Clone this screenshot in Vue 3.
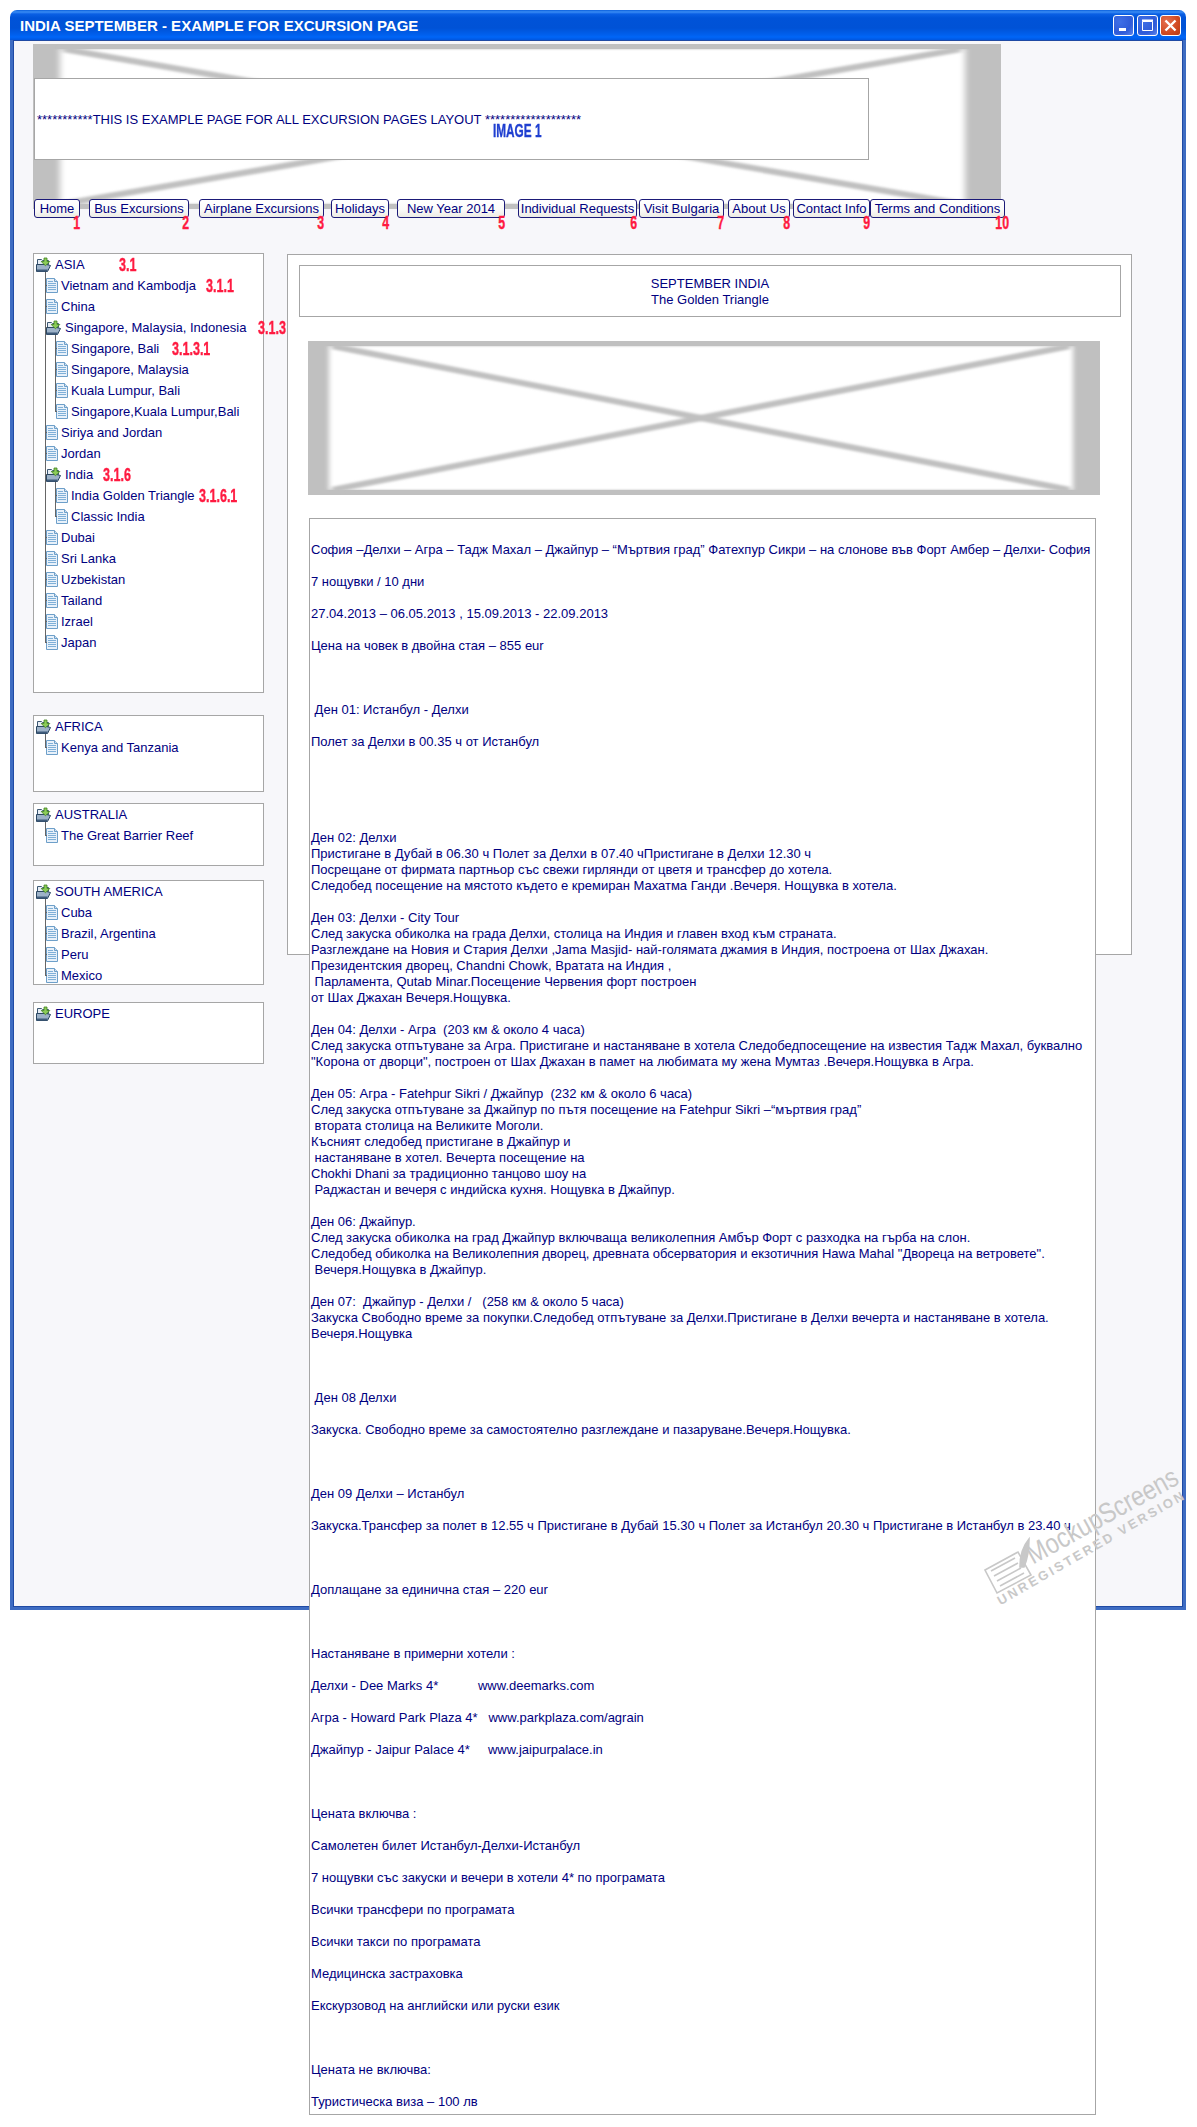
<script setup>
const navItems = ['Home', 'Bus Excursions', 'Airplane Excursions', 'Holidays', 'New Year 2014', 'Individual Requests', 'Visit Bulgaria', 'About Us', 'Contact Info', 'Terms and Conditions']

const panels = [
  {
    id: 'asia', title: 'ASIA', tag: { text: '3.1', x: 85 },
    items: [
      { label: 'Vietnam and Kambodja', tag: { text: '3.1.1', x: 161 } },
      { label: 'China' },
      {
        label: 'Singapore, Malaysia, Indonesia', tag: { text: '3.1.3', x: 213 },
        children: [
          { label: 'Singapore, Bali', tag: { text: '3.1.3.1', x: 117 } },
          { label: 'Singapore, Malaysia' },
          { label: 'Kuala Lumpur, Bali' },
          { label: 'Singapore,Kuala Lumpur,Bali' }
        ]
      },
      { label: 'Siriya and Jordan' },
      { label: 'Jordan' },
      {
        label: 'India', tag: { text: '3.1.6', x: 58 },
        children: [
          { label: 'India Golden Triangle', tag: { text: '3.1.6.1', x: 144 } },
          { label: 'Classic India' }
        ]
      },
      { label: 'Dubai' },
      { label: 'Sri Lanka' },
      { label: 'Uzbekistan' },
      { label: 'Tailand' },
      { label: 'Izrael' },
      { label: 'Japan' }
    ]
  },
  { id: 'africa', title: 'AFRICA', items: [{ label: 'Kenya and Tanzania' }] },
  { id: 'australia', title: 'AUSTRALIA', items: [{ label: 'The Great Barrier Reef' }] },
  { id: 'samerica', title: 'SOUTH AMERICA', items: [{ label: 'Cuba' }, { label: 'Brazil, Argentina' }, { label: 'Peru' }, { label: 'Mexico' }] },
  { id: 'europe', title: 'EUROPE', items: [] }
]

const programme = `София –Делхи – Агра – Тадж Махал – Джайпур – “Мъртвия град” Фатехпур Сикри – на слонове във Форт Амбер – Делхи- София

7 нощувки / 10 дни

27.04.2013 – 06.05.2013 , 15.09.2013 - 22.09.2013

Цена на човек в двойна стая – 855 eur



 Ден 01: Истанбул - Делхи

Полет за Делхи в 00.35 ч от Истанбул





Ден 02: Делхи
Пристигане в Дубай в 06.30 ч Полет за Делхи в 07.40 чПристигане в Делхи 12.30 ч
Посрещане от фирмата партньор със свежи гирлянди от цветя и трансфер до хотела.
Следобед посещение на мястото където е кремиран Махатма Ганди .Вечеря. Нощувка в хотела.

Ден 03: Делхи - City Tour
След закуска обиколка на града Делхи, столица на Индия и главен вход към страната.
Разглеждане на Новия и Стария Делхи ,Jama Masjid- най-голямата джамия в Индия, построена от Шах Джахан.
Президентския дворец, Chandni Chowk, Вратата на Индия ,
 Парламента, Qutab Minar.Посещение Червения форт построен
от Шах Джахан Вечеря.Нощувка.

Ден 04: Делхи - Агра  (203 км & около 4 часа)
След закуска отпътуване за Агра. Пристигане и настаняване в хотела Следобедпосещение на известия Тадж Махал, буквално
"Корона от дворци", построен от Шах Джахан в памет на любимата му жена Мумтаз .Вечеря.Нощувка в Агра.

Ден 05: Агра - Fatehpur Sikri / Джайпур  (232 км & около 6 часа)
След закуска отпътуване за Джайпур по пътя посещение на Fatehpur Sikri –“мъртвия град”
 втората столица на Великите Моголи.
Късният следобед пристигане в Джайпур и
 настаняване в хотел. Вечерта посещение на
Chokhi Dhani за традиционно танцово шоу на
 Раджастан и вечеря с индийска кухня. Нощувка в Джайпур.

Ден 06: Джайпур.
След закуска обиколка на град Джайпур включваща великолепния Амбър Форт с разходка на гърба на слон.
Следобед обиколка на Великолепния дворец, древната обсерватория и екзотичния Hawa Mahal "Двореца на ветровете".
 Вечеря.Нощувка в Джайпур.

Ден 07:  Джайпур - Делхи /   (258 км & около 5 часа)
Закуска Свободно време за покупки.Следобед отпътуване за Делхи.Пристигане в Делхи вечерта и настаняване в хотела.
Вечеря.Нощувка



 Ден 08 Делхи

Закуска. Свободно време за самостоятелно разглеждане и пазаруване.Вечеря.Нощувка.



Ден 09 Делхи – Истанбул

Закуска.Трансфер за полет в 12.55 ч Пристигане в Дубай 15.30 ч Полет за Истанбул 20.30 ч Пристигане в Истанбул в 23.40 ч



Доплащане за единична стая – 220 eur



Настаняване в примерни хотели :

Делхи - Dee Marks 4*           www.deemarks.com

Агра - Howard Park Plaza 4*   www.parkplaza.com/agrain

Джайпур - Jaipur Palace 4*     www.jaipurpalace.in



Цената включва :

Самолетен билет Истанбул-Делхи-Истанбул

7 нощувки със закуски и вечери в хотели 4* по програмата

Всички трансфери по програмата

Всички такси по програмата

Медицинска застраховка

Екскурзовод на английски или руски език



Цената не включва:

Туристическа виза – 100 лв`
</script>

<template>
  <div class="page">
    <div class="window">
      <header class="titlebar">
        <span class="title">INDIA SEPTEMBER - EXAMPLE FOR EXCURSION PAGE</span>
        <div class="controls">
          <span class="ctl"><svg viewBox="0 0 19 19" width="19" height="19"><rect x="5" y="12" width="7" height="3" fill="#fff" /></svg></span>
          <span class="ctl"><svg viewBox="0 0 19 19" width="19" height="19"><path d="M4.500 5.500h10v9h-10z" fill="none" stroke="#fff" /><path d="M4 4.500h11" stroke="#fff" stroke-width="2" /></svg></span>
          <span class="ctl close"><svg viewBox="0 0 19 19" width="19" height="19"><path d="M4.500 4.500l10 10M14.500 4.500l-10 10" stroke="#fff" stroke-width="2.400" fill="none" /></svg></span>
        </div>
      </header>

      <div class="body">
        <div class="hero">
          <svg class="ph" width="968" height="165" viewBox="0 0 968 165">
            <defs><filter id="soft1" x="-5%" y="-10%" width="110%" height="120%"><feGaussianBlur stdDeviation="3 .8" /></filter></defs>
            <rect width="968" height="165" fill="#c0c0c0" />
            <rect x="27" y="5" width="905" height="155" fill="#fff" filter="url(#soft1)" />
            <rect x="0" y="0" width="968" height="5" fill="#c0c0c0" />
            <rect x="0" y="160" width="968" height="5" fill="#c0c0c0" />
            <path d="M30 5L928 160M30 160L928 5" stroke="#c0c0c0" stroke-width="6" fill="none" filter="url(#soft1)" />
          </svg>
          <div class="hero-note">***********THIS IS EXAMPLE PAGE FOR ALL EXCURSION PAGES LAYOUT *******************</div>
          <span class="image-label">IMAGE 1</span>
        </div>

        <nav class="nav">
          <button v-for="(item, i) in navItems" :key="item" class="nav-btn" type="button">
            {{ item }}<span class="nav-num">{{ i + 1 }}</span>
          </button>
        </nav>

        <div class="columns">
          <aside class="side">
            <section v-for="panel in panels" :key="panel.id" class="panel" :class="panel.id">
              <div class="row root">
                <svg class="folder" width="16" height="16" viewBox="0 0 16 16">
                  <path d="M1.500 2.500h4l1 1h6v4h-11z" fill="#e6edf4" stroke="#3c5873" />
                  <path d="M.5 14.500v-7h10l4 1-3 6z" fill="#9db2c8" stroke="#2c4863" />
                  <path d="M1 14.500h10l.8-2H1z" fill="#3f5b7a" />
                  <path d="M8 1h3v3.500h2.800L9.500 8.800 5.200 4.500H8z" fill="#8ccc58" stroke="#3f8220" stroke-width=".8" />
                </svg>
                <span class="label">{{ panel.title }}</span>
                <span v-if="panel.tag" class="tag" :style="{ left: panel.tag.x + 'px' }">{{ panel.tag.text }}</span>
              </div>
              <ul class="tree">
                <li v-for="item in panel.items" :key="item.label" class="node">
                  <div class="row" :class="{ branch: item.children }">
                    <svg v-if="item.children" class="folder" width="16" height="16" viewBox="0 0 16 16">
                      <path d="M1.500 2.500h4l1 1h6v4h-11z" fill="#e6edf4" stroke="#3c5873" />
                      <path d="M.5 14.500v-7h10l4 1-3 6z" fill="#9db2c8" stroke="#2c4863" />
                      <path d="M1 14.500h10l.8-2H1z" fill="#3f5b7a" />
                      <path d="M8 1h3v3.500h2.800L9.500 8.800 5.200 4.500H8z" fill="#8ccc58" stroke="#3f8220" stroke-width=".8" />
                    </svg>
                    <svg v-else class="leaf" width="12" height="15" viewBox="0 0 12 15">
                      <path d="M.5.5h8l3 3v11H.5z" fill="#e8f1fa" stroke="#6d9fc9" />
                      <path d="M8.500.5v3h3" fill="#cfe0ef" stroke="#6d9fc9" />
                      <path d="M2 3.500h5M2 5.500h8M2 7.500h8M2 9.500h8M2 11.500h8" stroke="#7fb0d8" fill="none" />
                    </svg>
                    <span class="label">{{ item.label }}</span>
                    <span v-if="item.tag" class="tag" :style="{ left: item.tag.x + 'px' }">{{ item.tag.text }}</span>
                  </div>
                  <ul v-if="item.children" class="tree sub">
                    <li v-for="child in item.children" :key="child.label" class="node">
                      <div class="row">
                        <svg class="leaf" width="12" height="15" viewBox="0 0 12 15">
                          <path d="M.5.5h8l3 3v11H.5z" fill="#e8f1fa" stroke="#6d9fc9" />
                          <path d="M8.500.5v3h3" fill="#cfe0ef" stroke="#6d9fc9" />
                          <path d="M2 3.500h5M2 5.500h8M2 7.500h8M2 9.500h8M2 11.500h8" stroke="#7fb0d8" fill="none" />
                        </svg>
                        <span class="label">{{ child.label }}</span>
                        <span v-if="child.tag" class="tag" :style="{ left: child.tag.x + 'px' }">{{ child.tag.text }}</span>
                      </div>
                    </li>
                  </ul>
                </li>
              </ul>
            </section>
          </aside>

          <main class="main">
            <div class="heading">SEPTEMBER INDIA<br />The Golden Triangle</div>
            <svg class="ph photo" width="792" height="154" viewBox="0 0 792 154">
              <defs><filter id="soft2" x="-5%" y="-10%" width="110%" height="120%"><feGaussianBlur stdDeviation="2.500 .8" /></filter></defs>
              <rect width="792" height="154" fill="#c0c0c0" />
              <rect x="21" y="5" width="744" height="144" fill="#fff" filter="url(#soft2)" />
              <rect x="0" y="0" width="792" height="5" fill="#c0c0c0" />
              <rect x="0" y="149" width="792" height="5" fill="#c0c0c0" />
              <path d="M24 5L762 149M24 149L762 5" stroke="#c0c0c0" stroke-width="6" fill="none" filter="url(#soft2)" />
            </svg>
            <div class="programme">{{ programme }}</div>
          </main>
        </div>
      </div>
    </div>

    <svg class="wm-icon" width="60" height="60" viewBox="0 0 60 60" fill="none" stroke="#c8c8c8" stroke-width="1.600">
      <path d="M2 34L35 16L48 39L14 57Z" />
      <path d="M8 35L32 22M11 40L35 27M14 45L38 32M17 50L41 37" />
      <path d="M37 31C37 20 40 10 46 3C46 12 44 24 41 31Z" fill="#c8c8c8" />
    </svg>
    <span class="wm-name">MockupScreens</span>
    <span class="wm-note">UNREGISTERED VERSION</span>
  </div>
</template>

<style scoped>
.page {
  position: relative;
  height: 2127px;
  font-family: "Liberation Sans", Arial, sans-serif;
  font-size: 12px;
  color: #000080;
}
.window {
  position: absolute;
  left: 10px;
  top: 10px;
  width: 1176px;
  height: 1600px;
  display: flex;
  flex-direction: column;
}
.titlebar {
  height: 30px;
  flex: none;
  display: flex;
  align-items: center;
  justify-content: space-between;
  padding: 0 5px 0 10px;
  border-radius: 7px 7px 0 0;
  background: linear-gradient(#0a5fdc 0, #3a8cf4 2px, #0a5fe4 4px, #0053d8 8px, #0052d6 18px, #0060ee 25px, #0066f8 27px, #0056e0 30px);
}
.title {
  color: #fff;
  font-weight: bold;
  font-size: 15px;
}
.controls {
  display: flex;
  gap: 2.500px;
  margin-top: 1px;
}
.ctl {
  width: 21px;
  height: 21px;
  box-sizing: border-box;
  border: 1px solid #fff;
  border-radius: 3px;
  background: radial-gradient(circle at 30% 30%, #3f6fe6, #2f5bd8 60%, #5e86ec);
  display: block;
}
.ctl svg {
  display: block;
}
.ctl.close {
  background: radial-gradient(circle at 30% 30%, #e67050, #d04a22 60%, #b83a14);
}
.body {
  flex: 1;
  min-height: 0;
  box-sizing: border-box;
  padding: 4px 0 0 20px;
  border: 3px solid #3e6cc2;
  border-top: 0;
  background: #f7f7fa;
  box-shadow: inset 0 0 0 1px #1f4aa4;
}
.hero {
  position: relative;
  width: 968px;
  height: 165px;
}
.ph {
  display: block;
}
.hero-note {
  position: absolute;
  left: 1px;
  top: 34px;
  width: 835px;
  height: 82px;
  box-sizing: border-box;
  padding-left: 2px;
  display: flex;
  align-items: center;
  background: #fff;
  border: 1px solid #a6a6a6;
  font-size: 13px;
}
.image-label {
  position: absolute;
  left: 460px;
  top: 79px;
  font-size: 19px;
  line-height: 16px;
  font-weight: bold;
  color: #1f3fd0;
  -webkit-text-stroke: .4px #1f3fd0;
  transform: scaleX(.62);
  transform-origin: 0 50%;
  white-space: nowrap;
}
.nav {
  position: relative;
  display: flex;
  margin: -10px 0 0 1px;
}
.nav-btn {
  position: relative;
  flex: none;
  height: 19px;
  box-sizing: border-box;
  padding: 0;
  border: 1px solid #1b1a78;
  border-radius: 3px;
  background: linear-gradient(#fff 0, #fbfbf9 55%, #ecebe4 100%);
  color: #000080;
  font: 13px "Liberation Sans", Arial, sans-serif;
  line-height: 16px;
  white-space: nowrap;
}
.nav-btn:nth-child(1) { width: 46px; }
.nav-btn:nth-child(2) { width: 100px; margin-left: 9px; }
.nav-btn:nth-child(3) { width: 125px; margin-left: 10px; }
.nav-btn:nth-child(4) { width: 58px; margin-left: 7px; }
.nav-btn:nth-child(5) { width: 108px; margin-left: 8px; }
.nav-btn:nth-child(6) { width: 119px; margin-left: 13px; }
.nav-btn:nth-child(7) { width: 85px; margin-left: 2px; }
.nav-btn:nth-child(8) { width: 62px; margin-left: 4px; }
.nav-btn:nth-child(9) { width: 77px; margin-left: 3px; }
.nav-btn:nth-child(10) { width: 135px; }
.nav-num {
  position: absolute;
  right: 2px;
  top: 16px;
  font-size: 19px;
  line-height: 14px;
  font-weight: bold;
  color: #ff1a40;
  -webkit-text-stroke: .4px #ff1a40;
  transform: translateX(50%) scaleX(.65);
}
.columns {
  display: flex;
  align-items: flex-start;
  margin-top: 35px;
}
.side {
  width: 231px;
  flex: none;
}
.panel {
  position: relative;
  box-sizing: border-box;
  background: #fff;
  border: 1px solid #a6a6a6;
}
.panel.asia { height: 440px; }
.panel.africa { height: 77px; margin-top: 22px; }
.panel.australia { height: 63px; margin-top: 11px; }
.panel.samerica { height: 105px; margin-top: 14px; }
.panel.europe { height: 62px; margin-top: 17px; }
.tree {
  list-style: none;
  margin: 0;
  padding: 0 0 0 11px;
}
.tree.sub {
  padding-left: 10px;
}
.node {
  position: relative;
}
.node::before {
  content: "";
  position: absolute;
  left: 0;
  top: 0;
  bottom: 0;
  width: 1px;
  background: #666;
}
.node:first-child::before {
  top: -3px;
}
.node:last-child::before {
  bottom: auto;
  height: 11px;
}
.node:only-child::before {
  height: 14px;
}
.row {
  position: relative;
  height: 21px;
  display: flex;
  align-items: center;
  white-space: nowrap;
  font-size: 13px;
}
.row.root {
  padding-left: 2px;
}
.node > .row::before {
  content: "";
  position: absolute;
  left: 0;
  top: 10px;
  width: 2px;
  height: 1px;
  background: #666;
}
.folder,
.leaf {
  flex: none;
  margin-left: 1px;
}
.root .folder {
  margin-left: 0;
}
.label {
  margin-left: 3px;
}
.tag {
  position: absolute;
  top: 3px;
  font-size: 19px;
  line-height: 16px;
  font-weight: bold;
  color: #ff1a40;
  -webkit-text-stroke: .4px #ff1a40;
  transform: scaleX(.66);
  transform-origin: 0 50%;
}
.main {
  width: 845px;
  height: 701px;
  flex: none;
  box-sizing: border-box;
  margin: 1px 0 0 23px;
  background: #fff;
  border: 1px solid #a6a6a6;
  padding: 10px 0 0;
}
.heading {
  width: 822px;
  height: 52px;
  box-sizing: border-box;
  margin-left: 11px;
  padding-top: 10px;
  border: 1px solid #a6a6a6;
  text-align: center;
  line-height: 16px;
  font-size: 13px;
}
.photo {
  margin: 24px 0 0 20px;
}
.programme {
  position: relative;
  width: 787px;
  height: 1597px;
  box-sizing: border-box;
  margin: 23px 0 0 21px;
  padding: 23px 0 0 1px;
  background: #fff;
  border: 1px solid #a6a6a6;
  white-space: pre;
  line-height: 16px;
  font-size: 13px;
}
.wm-icon {
  position: absolute;
  left: 983px;
  top: 1536px;
}
.wm-name {
  position: absolute;
  left: 1036px;
  top: 1540px;
  font-size: 28px;
  line-height: 30px;
  color: #c8c8c8;
  white-space: nowrap;
  transform: rotate(-29deg) scaleX(.84);
  transform-origin: 0 100%;
}
.wm-note {
  position: absolute;
  left: 1002px;
  top: 1594px;
  font-size: 13px;
  line-height: 14px;
  font-weight: bold;
  letter-spacing: 2.500px;
  color: #c8c8c8;
  white-space: nowrap;
  transform: rotate(-30deg);
  transform-origin: 0 100%;
}
</style>

<style>
html, body {
  margin: 0;
  background: #fff;
}
</style>
